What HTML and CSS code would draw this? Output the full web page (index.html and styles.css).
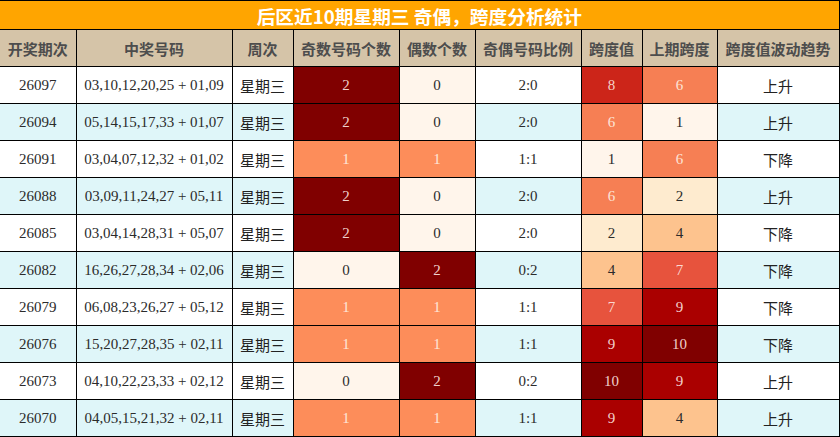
FILE: index.html
```html
<!DOCTYPE html>
<html lang="zh">
<head>
<meta charset="utf-8">
<link rel="stylesheet" href="styles.css">
</head>
<body>
<table class="stats">
<colgroup>
<col class="c1"><col class="c2"><col class="c3"><col class="c4"><col class="c5"><col class="c6"><col class="c7"><col class="c8"><col class="c9">
</colgroup>
<thead>
<tr><th colspan="9" class="title">后区近10期星期三 奇偶，跨度分析统计</th></tr>
<tr class="head"><th>开奖期次</th><th>中奖号码</th><th>周次</th><th>奇数号码个数</th><th>偶数个数</th><th>奇偶号码比例</th><th>跨度值</th><th>上期跨度</th><th>跨度值波动趋势</th></tr>
</thead>
<tbody>
<tr><td>26097</td><td>03,10,12,20,25 + 01,09</td><td class="cjk">星期三</td><td class="o2">2</td><td class="o0">0</td><td>2:0</td><td class="s8">8</td><td class="s6">6</td><td class="cjk">上升</td></tr>
<tr class="alt"><td>26094</td><td>05,14,15,17,33 + 01,07</td><td class="cjk">星期三</td><td class="o2">2</td><td class="o0">0</td><td>2:0</td><td class="s6">6</td><td class="s1">1</td><td class="cjk">上升</td></tr>
<tr><td>26091</td><td>03,04,07,12,32 + 01,02</td><td class="cjk">星期三</td><td class="o1">1</td><td class="o1">1</td><td>1:1</td><td class="s1">1</td><td class="s6">6</td><td class="cjk">下降</td></tr>
<tr class="alt"><td>26088</td><td>03,09,11,24,27 + 05,11</td><td class="cjk">星期三</td><td class="o2">2</td><td class="o0">0</td><td>2:0</td><td class="s6">6</td><td class="s2">2</td><td class="cjk">上升</td></tr>
<tr><td>26085</td><td>03,04,14,28,31 + 05,07</td><td class="cjk">星期三</td><td class="o2">2</td><td class="o0">0</td><td>2:0</td><td class="s2">2</td><td class="s4">4</td><td class="cjk">下降</td></tr>
<tr class="alt"><td>26082</td><td>16,26,27,28,34 + 02,06</td><td class="cjk">星期三</td><td class="o0">0</td><td class="o2">2</td><td>0:2</td><td class="s4">4</td><td class="s7">7</td><td class="cjk">下降</td></tr>
<tr><td>26079</td><td>06,08,23,26,27 + 05,12</td><td class="cjk">星期三</td><td class="o1">1</td><td class="o1">1</td><td>1:1</td><td class="s7">7</td><td class="s9">9</td><td class="cjk">下降</td></tr>
<tr class="alt"><td>26076</td><td>15,20,27,28,35 + 02,11</td><td class="cjk">星期三</td><td class="o1">1</td><td class="o1">1</td><td>1:1</td><td class="s9">9</td><td class="s10">10</td><td class="cjk">下降</td></tr>
<tr><td>26073</td><td>04,10,22,23,33 + 02,12</td><td class="cjk">星期三</td><td class="o0">0</td><td class="o2">2</td><td>0:2</td><td class="s10">10</td><td class="s9">9</td><td class="cjk">上升</td></tr>
<tr class="alt"><td>26070</td><td>04,05,15,21,32 + 02,11</td><td class="cjk">星期三</td><td class="o1">1</td><td class="o1">1</td><td>1:1</td><td class="s9">9</td><td class="s4">4</td><td class="cjk">上升</td></tr>
</tbody>
</table>
</body>
</html>
```
FILE: styles.css
```css
html, body {
  margin: 0;
  padding: 0;
  background: #ffffff;
}
.stats {
  border-collapse: collapse;
  table-layout: fixed;
  width: 839px;
  font-family: "Liberation Serif", "Noto Sans CJK SC", serif;
  font-size: 15px;
  color: #2b2b2b;
}
.c1 { width: 76px; }
.c2 { width: 156px; }
.c3 { width: 61px; }
.c4 { width: 106px; }
.c5 { width: 76px; }
.c6 { width: 106px; }
.c7 { width: 61px; }
.c8 { width: 75px; }
.c9 { width: 122px; }
.stats th, .stats td {
  border: 1px solid #000000;
  text-align: center;
  padding: 0;
}
.stats td {
  height: 36px;
}
.stats tbody tr {
  height: 37px;
}
.title {
  background: #ffa500;
  color: #ffffff;
  height: 28px;
  font-family: "Noto Sans CJK SC", sans-serif;
  font-size: 18.7px;
  font-weight: bold;
  line-height: 27px;
  border-left: none;
  border-right: none;
}
.head th {
  background: #d5c4a8;
  color: #4d4d4d;
  height: 36px;
  font-family: "Noto Sans CJK SC", sans-serif;
  font-size: 15px;
  font-weight: bold;
}
.stats tr > *:first-child { border-left: none; }
.alt td { background: #dff6f9; }
.cjk {
  font-family: "Noto Sans CJK SC", sans-serif;
  font-size: 15px;
  color: #222222;
}
.stats td.o2 { background: #800000; color: #f0d0cc; }
.stats td.o1 { background: #fd8d5a; color: #fde6d8; }
.stats td.o0 { background: #fff5eb; }
.stats td.s1 { background: #fff5eb; }
.stats td.s2 { background: #feebcf; }
.stats td.s4 { background: #fdc38e; }
.stats td.s6 { background: #f67f54; color: #fde4d8; }
.stats td.s7 { background: #e7533d; color: #fbd8d0; }
.stats td.s8 { background: #cc2519; color: #f6d2c8; }
.stats td.s9 { background: #aa0000; color: #f3d0cc; }
.stats td.s10 { background: #800000; color: #f0d0cc; }
```
